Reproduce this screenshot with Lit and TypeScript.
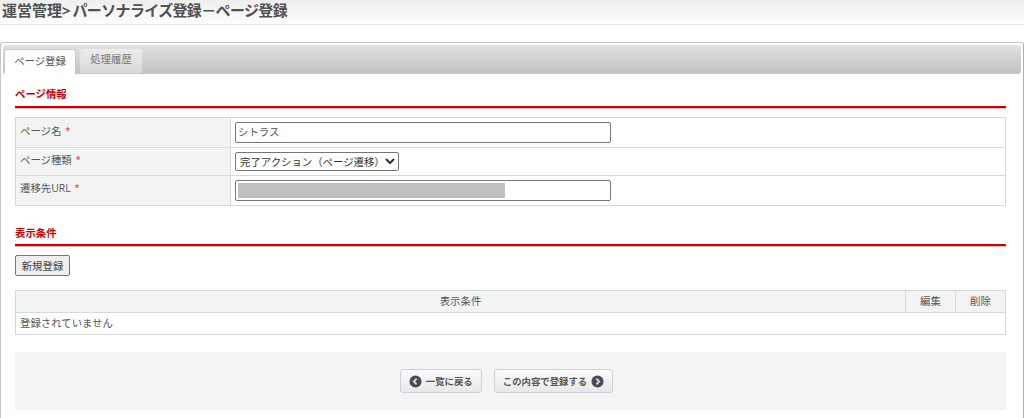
import { LitElement, html, css } from "lit";
import { customElement } from "lit/decorators.js";

const back = html`<svg class="ic" viewBox="0 0 14 14" width="13" height="13"><circle cx="7" cy="7" r="6.5" fill="#4a4a58"/><path d="M8.2 4 5.2 7l3 3" fill="none" stroke="#d8d8dc" stroke-width="2"/></svg>`;
const next = html`<svg class="ic" viewBox="0 0 14 14" width="13" height="13"><circle cx="7" cy="7" r="6.5" fill="#4a4a58"/><path d="M5.8 4l3 3-3 3" fill="none" stroke="#d8d8dc" stroke-width="2"/></svg>`;

@customElement("app-root")
export class AppRoot extends LitElement {
  static styles = css`
    :host {
      display: block;
      width: 1024px;
      height: 418px;
      overflow: hidden;
      background: #fff;
      color: #555;
      font-family: "Open Sans", "Noto Sans CJK JP", sans-serif;
      font-size: 10.4px;
    }
    * { box-sizing: border-box; }
    .head {
      height: 25px;
      padding: 0 0 0 2px;
      background: linear-gradient(#eeeeee, #fdfdfd);
      border-bottom: 1px solid #e6e6e6;
      font-size: 15px;
      font-weight: 700;
      line-height: 20px;
      color: #505050;
      white-space: nowrap;
    }
    .kana { letter-spacing: -0.65px; margin-left: -2px; }
    .panel {
      margin: 17px 0 0 0;
      border: 1px solid #c8c8c8;
      border-right-color: #b0b0b0;
      border-bottom: none;
      border-radius: 3px 3px 0 0;
      height: 376px;
      padding: 2px 2px 0 2px;
    }
    .tabs {
      height: 29px;
      display: flex;
      align-items: flex-end;
      gap: 4px;
      padding-left: 1px;
      background: linear-gradient(#e2e2e2, #c2c2c2);
      border-radius: 3px;
      border-bottom: 1px solid #c8c8c8;
    }
    .tab {
      height: 24px;
      line-height: 21px;
      text-align: center;
      border-radius: 3px 3px 0 0;
      background: linear-gradient(#ededed, #d8d8d8);
      color: #777;
      width: 62px;
    }
    .tab.on {
      height: 25px;
      margin-bottom: -1px;
      width: 72px;
      background: #fff;
      color: #555;
      border: 1px solid #c8c8c8;
      border-bottom: none;
      line-height: 22px;
    }
    .body { padding: 0 15px 0 12px; }
    h2 {
      margin: 0;
      font-size: 10.4px;
      font-weight: 700;
      line-height: 14px;
      color: #cc0000;
      border-bottom: 2px solid #d00000;
      box-shadow: 0 1px 0 #eeb4b4;
      height: 27px;
    }
    h2.first { margin-top: 7px; padding-top: 6px; }
    h2.second { margin-top: 13px; padding-top: 7px; }
    table {
      width: 991px;
      border-collapse: collapse;
      table-layout: fixed;
    }
    th, td {
      border: 1px solid #d8d8d8;
      font-weight: 400;
      padding: 0 4px;
      text-align: left;
    }
    th { background: #f2f4f4; }
    .form { margin-top: 9px; }
    .form th { width: 215px; vertical-align: top; padding-top: 4px; line-height: 15px; }
    .form td { padding-left: 4px; }
    .form .r1 th { padding-top: 5px; }
    .r1 { height: 30px; }
    .r2 { height: 28px; }
    .r3 { height: 30px; }
    .req { color: #f0102a; margin-left: 4px; font-weight: 400; font-size: 9px; vertical-align: 1px; }
    .input {
      display: block;
      width: 376px;
      height: 21px;
      border: 1px solid #767676;
      border-radius: 2px;
      background: #fff;
      padding: 1px 2px;
      font: inherit;
      color: #555;
    }
    input.input { padding: 0 2px 2px; outline: none; }
    .blur { display: block; width: 267px; height: 15px; background: #c0c0c0; margin-top: 1px; }
    select {
      display: block;
      width: 164px;
      height: 19px;
      border: 1px solid #767676;
      border-radius: 2px;
      background: #fff;
      font: inherit;
      color: #333;
      padding: 0;
    }
    .new {
      display: block;
      margin: 9px 0 0;
      width: 55px;
      height: 21px;
      padding: 0;
      font: inherit;
      color: #444;
      background: #efefef;
      border: 1px solid #767676;
      border-radius: 2px;
    }
    .list { margin-top: 14px; }
    .list th { height: 22px; text-align: center; padding-bottom: 2px; }
    .list td { height: 22px; padding-bottom: 2px; }
    .c1 { width: 50px; }
    .foot {
      margin-top: 17px;
      height: 58px;
      background: #f4f4f4;
      display: flex;
      justify-content: center;
      align-items: center;
      gap: 12px;
      padding-right: 8px;
    }
    .btn {
      height: 24px;
      display: flex;
      align-items: center;
      gap: 4px;
      padding: 0 8px;
      border: 1px solid #cfcfd8;
      border-radius: 3px;
      background: linear-gradient(#fbfbfb, #e8e8e8);
      font: inherit;
      font-weight: 700;
      font-size: 9.4px;
      color: #555;
    }
    .ic { display: block; flex: none; }
  `;

  render() {
    return html`
      <div class="head">運営管理&gt; <span class="kana">パーソナライズ登録－ページ登録</span></div>
      <div class="panel">
        <div class="tabs">
          <div class="tab on">ページ登録</div>
          <div class="tab">処理履歴</div>
        </div>
        <div class="body">
          <h2 class="first">ページ情報</h2>
          <table class="form">
            <tr class="r1">
              <th>ページ名<span class="req">*</span></th>
              <td><input class="input" value="シトラス" /></td>
            </tr>
            <tr class="r2">
              <th>ページ種類<span class="req">*</span></th>
              <td><select><option>完了アクション（ページ遷移）</option></select></td>
            </tr>
            <tr class="r3">
              <th>遷移先URL<span class="req">*</span></th>
              <td><div class="input"><span class="blur"></span></div></td>
            </tr>
          </table>
          <h2 class="second">表示条件</h2>
          <button class="new">新規登録</button>
          <table class="list">
            <tr><th>表示条件</th><th class="c1">編集</th><th class="c1">削除</th></tr>
            <tr><td colspan="3">登録されていません</td></tr>
          </table>
          <div class="foot">
            <button class="btn">${back}一覧に戻る</button>
            <button class="btn">この内容で登録する${next}</button>
          </div>
        </div>
      </div>
    `;
  }
}
